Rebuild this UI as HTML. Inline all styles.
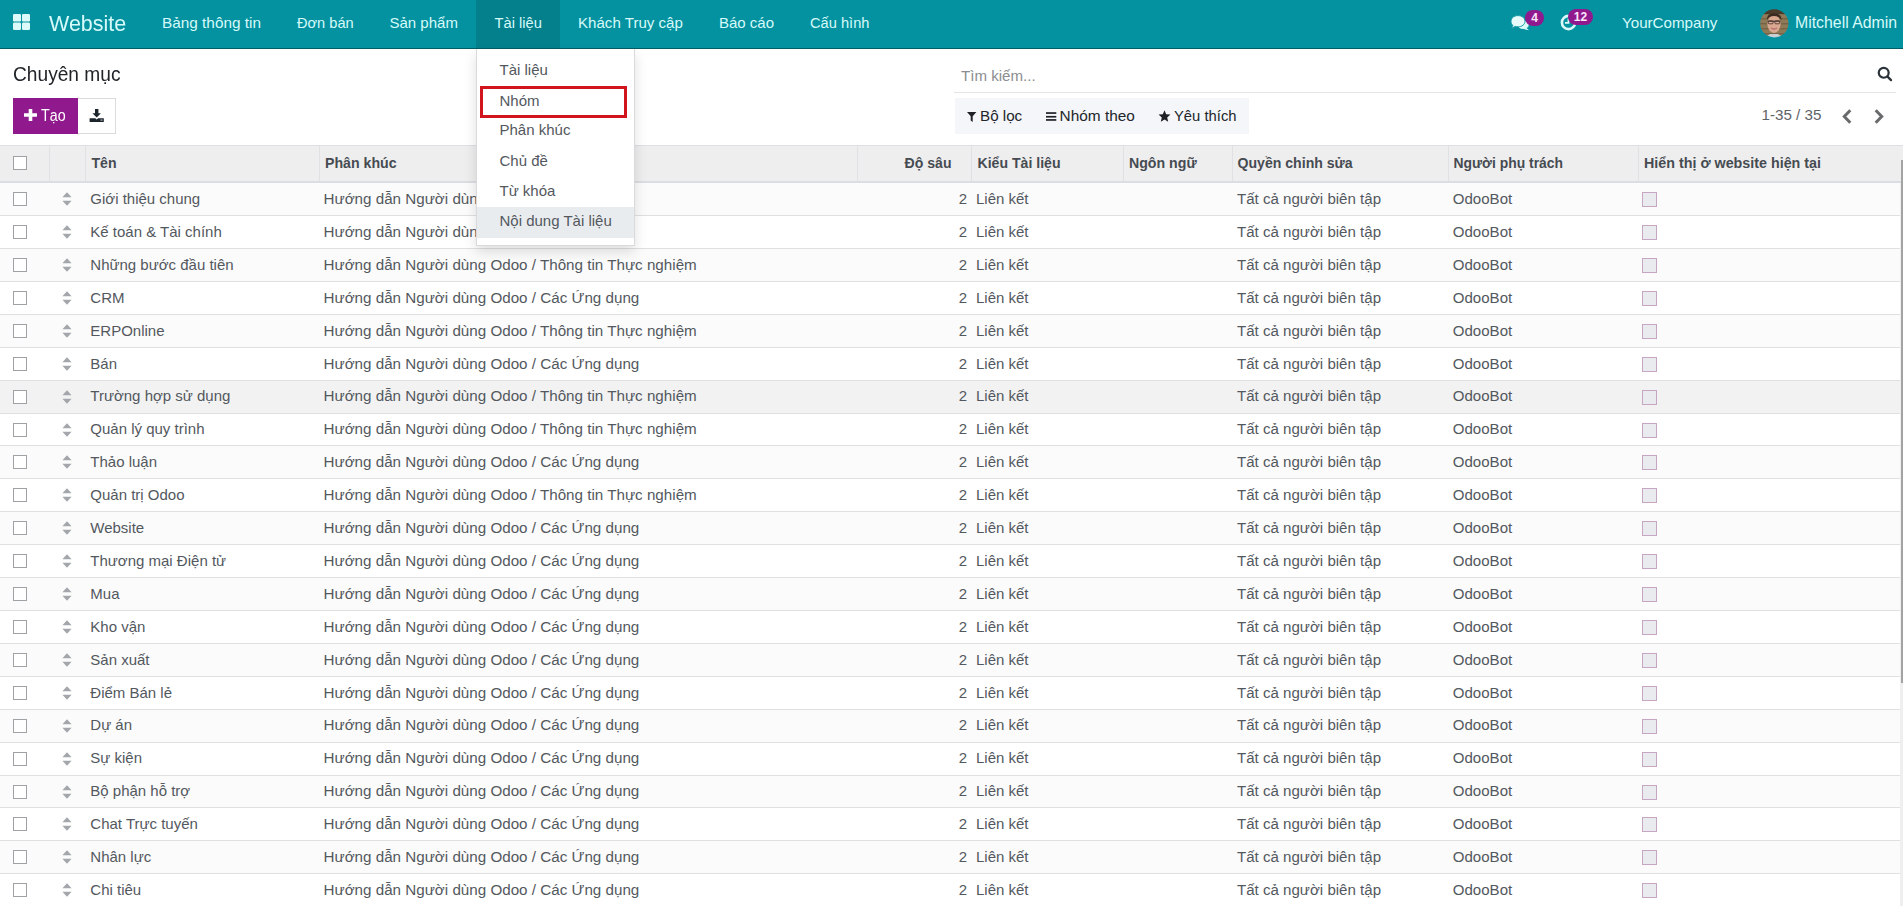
<!DOCTYPE html><html><head><meta charset='utf-8'><title>Chuyên mục</title><style>
*{box-sizing:border-box;margin:0;padding:0}
html,body{width:1903px;height:906px;overflow:hidden;background:#fff;font-family:"Liberation Sans",sans-serif}
.t{position:absolute;line-height:20px;white-space:nowrap}
.a{position:absolute}
nav.o_main_navbar{position:absolute;left:0;top:0;width:1903px;height:49px;background:#0592a0;border-bottom:1px solid #035d64}
.navtxt{color:#d6fafa}
.badge{position:absolute;background:#901a8d;color:#fbe6fb;border-radius:9px;font-size:12px;font-weight:bold;line-height:16px;height:16px;text-align:center}
.hdr{position:absolute;left:0;top:145px;width:1903px;height:38px;background:#eeeeee;border-top:1px solid #dcdfe3;border-bottom:2px solid #dadde1}
.vsep{position:absolute;top:146px;height:35px;width:1px;background:#dfe1e4}
.row{position:absolute;left:0;width:1900px;border-bottom:1px solid #dfe0e2}
.cb{position:absolute;width:14px;height:14px;border:1px solid #9fa2a5;background:#fff}
.cbd{position:absolute;width:15px;height:15px;border:1px solid #c7a6c4;background:#e9ebee}
.dd{position:absolute;left:476px;top:49px;width:159px;height:197px;background:#fff;border:1px solid #d9dadb;border-top:none;box-shadow:0 6px 12px rgba(0,0,0,0.13)}
</style></head><body>
<nav class='o_main_navbar'>
<svg class='a' style='left:13px;top:14px' width='17' height='16' viewBox='0 0 17 16'><g fill='#dcfafa'><rect x='0' y='0' width='8' height='7.5' rx='1.2'/><rect x='9' y='0' width='8' height='7.5' rx='1.2'/><rect x='0' y='8.5' width='8' height='7.5' rx='1.2'/><rect x='9' y='8.5' width='8' height='7.5' rx='1.2'/></g></svg>
<span class='t ' style='top:14px;font-size:22.5px;color:#d6fafa;left:48.7px;transform:scaleX(0.955);transform-origin:0 0;'>Website</span>
<div class='a' style='left:476px;top:0;width:84px;height:48px;background:#04808c'></div>
<span class='t ' style='top:13px;font-size:15.35px;color:#d6fafa;left:162px;'>Bảng thông tin</span>
<span class='t ' style='top:13px;font-size:14.6px;color:#d6fafa;left:297px;'>Đơn bán</span>
<span class='t ' style='top:13px;font-size:15px;color:#d6fafa;left:389.5px;'>Sản phẩm</span>
<span class='t ' style='top:13px;font-size:14.7px;color:#d6fafa;left:494.5px;'>Tài liệu</span>
<span class='t ' style='top:13px;font-size:15.1px;color:#d6fafa;left:578px;'>Khách Truy cập</span>
<span class='t ' style='top:13px;font-size:15px;color:#d6fafa;left:719px;'>Báo cáo</span>
<span class='t ' style='top:13px;font-size:14.65px;color:#d6fafa;left:810px;'>Cấu hình</span>
<svg class='a' style='left:1510px;top:15px' width='20' height='16' viewBox='0 0 20 16'>
<g fill='#d8fbf8'><ellipse cx='13.2' cy='9.8' rx='5.6' ry='4.3'/><path d='M16 12.5 L19 15.3 L12.5 13.8Z'/></g>
<g fill='#e6fbfa' stroke='#0592a0' stroke-width='0.9'><path d='M8 0.6 C12 0.6 15 3 15 6.2 C15 9.4 12 11.8 8 11.8 C7 11.8 6 11.7 5.2 11.4 L1.6 13.4 L2.8 10.2 C1.6 9.2 1 7.8 1 6.2 C1 3 4 0.6 8 0.6Z'/></g></svg>
<div class='badge' style='left:1525px;top:10px;width:19px'>4</div>
<svg class='a' style='left:1560px;top:14px' width='17' height='17' viewBox='0 0 17 17'>
<circle cx='8.5' cy='8.5' r='6.6' fill='none' stroke='#dcfafa' stroke-width='2.6'/>
<path d='M8.5 4.5 V8.8 H5' fill='none' stroke='#dcfafa' stroke-width='1.8'/></svg>
<div class='badge' style='left:1568px;top:9px;width:25px'>12</div>
<span class='t ' style='top:13px;font-size:15.15px;color:#d6fafa;left:1622px;'>YourCompany</span>
<svg class='a' style='left:1760px;top:9px' width='29' height='29' viewBox='0 0 29 29'>
<defs><clipPath id='av'><circle cx='14.3' cy='14.4' r='14.1'/></clipPath><filter id='bl' x='-10%' y='-10%' width='120%' height='120%'><feGaussianBlur stdDeviation='0.55'/></filter></defs>
<g clip-path='url(#av)'><g filter='url(#bl)'><rect width='29' height='29' fill='#8f7a58'/>
<g fill='#6f5c40' opacity='0.7'><rect y='4' width='29' height='1.5'/><rect y='9' width='29' height='1.5'/><rect y='14' width='29' height='1.5'/><rect y='19' width='29' height='1.5'/><rect y='24' width='29' height='1.5'/></g>
<rect x='0' y='0' width='29' height='5' fill='#3a2c22' opacity='0.8'/>
<path d='M10 25 L18 25 L24 29 L4 29Z' fill='#c9cfd2'/>
<ellipse cx='14' cy='15' rx='6.6' ry='9' fill='#d9a890'/>
<path d='M6.8 11 Q7 4 14 4.3 Q21.5 4.5 21.5 11 Q19 7 14 7 Q9 7 6.8 11Z' fill='#3b2a22'/>
<path d='M7.5 12.2 H20.5' stroke='#3a2c2a' stroke-width='1'/>
<rect x='8.3' y='11.8' width='4.8' height='3' rx='1' fill='none' stroke='#3a2c2a' stroke-width='0.8'/>
<rect x='14.8' y='11.8' width='4.8' height='3' rx='1' fill='none' stroke='#3a2c2a' stroke-width='0.8'/>
<path d='M11 19 Q14 21 17 19' fill='none' stroke='#b86a6a' stroke-width='1.3'/>
</g></g></svg>
<span class='t ' style='top:13px;font-size:15.85px;color:#d6fafa;left:1795px;'>Mitchell Admin</span>
</nav>
<span class='t ' style='top:64px;font-size:21px;color:#212529;left:12.6px;transform:scaleX(0.912);transform-origin:0 0;'>Chuyên mục</span>
<div class='a' style='left:13px;top:98px;width:65px;height:36px;background:#901a8d'></div>
<svg class='a' style='left:24px;top:109px' width='13' height='12' viewBox='0 0 13 12'><path d='M4.7 0H8.3V4.3H13V7.7H8.3V12H4.7V7.7H0V4.3H4.7Z' fill='#fff'/></svg>
<span class='t ' style='top:106px;font-size:15.6px;color:#ffffff;left:40.5px;transform:scaleX(0.915);transform-origin:0 0;'>Tạo</span>
<div class='a' style='left:78px;top:98px;width:38px;height:36px;border:1px solid #dcdcdc;border-left:none;background:#fff'></div>
<svg class='a' style='left:89px;top:109px' width='15' height='13' viewBox='0 0 15 13'><path d='M6 0H9.4V4.3H11.9L7.7 8.6L3.4 4.3H6Z' fill='#1c242c'/><path d='M0.6 9.2H6.3L7.7 10.4L9.1 9.2H14.8V12.9H0.6Z' fill='#1c242c'/><rect x='11.5' y='10.6' width='2' height='0.9' fill='#e8e8e8'/></svg>
<span class='t ' style='top:66px;font-size:15.1px;color:#8b8d90;left:961px;'>Tìm kiếm...</span>
<div class='a' style='left:954px;top:92px;width:942px;height:1px;background:#e2e4e6'></div>
<svg class='a' style='left:1877px;top:66px' width='16' height='16' viewBox='0 0 16 16'><circle cx='6.7' cy='6.8' r='4.95' fill='none' stroke='#2b3238' stroke-width='2.2'/><path d='M10.3 10.4L14 14.1' stroke='#2b3238' stroke-width='2.3' stroke-linecap='round'/></svg>
<div class='a' style='left:955px;top:98px;width:294px;height:36px;background:#f4f6f9'></div>
<svg class='a' style='left:967px;top:112px' width='10' height='10' viewBox='0 0 10 10'><path d='M0 0H9.4L5.7 4.2V9.9L3.7 8.4V4.2Z' fill='#1e2227'/></svg>
<span class='t ' style='top:106px;font-size:15.2px;color:#22262b;left:980px;'>Bộ lọc</span>
<svg class='a' style='left:1046px;top:112px' width='11' height='9' viewBox='0 0 11 9'><g fill='#1e2227'><rect y='0.2' width='10.3' height='1.7'/><rect y='3.9' width='10.3' height='1.7'/><rect y='7.1' width='10.3' height='1.7'/></g></svg>
<span class='t ' style='top:106px;font-size:15.4px;color:#22262b;left:1059.6px;'>Nhóm theo</span>
<svg class='a' style='left:1158px;top:110px' width='13' height='12.5' viewBox='0 0 24 23'><path d='M12 0.5L15.1 7.6L23 8.3L17 13.6L18.8 21.6L12 17.3L5.2 21.6L7 13.6L1 8.3L8.9 7.6Z' fill='#1e2227'/></svg>
<span class='t ' style='top:106px;font-size:14.8px;color:#22262b;left:1174px;'>Yêu thích</span>
<span class='t ' style='top:105px;font-size:15.2px;color:#5f6368;left:1761.5px;'>1-35 / 35</span>
<svg class='a' style='left:1842px;top:108.5px' width='10' height='15' viewBox='0 0 10 15'><path d='M8.3 1.3L2.3 7.5L8.3 13.7' fill='none' stroke='#686a6c' stroke-width='3'/></svg>
<svg class='a' style='left:1874px;top:108.5px' width='10' height='15' viewBox='0 0 10 15'><path d='M1.7 1.3L7.7 7.5L1.7 13.7' fill='none' stroke='#686a6c' stroke-width='3'/></svg>
<div class='hdr'></div>
<div class='vsep' style='left:49px'></div>
<div class='vsep' style='left:85px'></div>
<div class='vsep' style='left:319px'></div>
<div class='vsep' style='left:857px'></div>
<div class='vsep' style='left:971px'></div>
<div class='vsep' style='left:1123px'></div>
<div class='vsep' style='left:1232px'></div>
<div class='vsep' style='left:1448px'></div>
<div class='vsep' style='left:1638px'></div>
<div class='cb' style='left:13px;top:156px'></div>
<span class='t ' style='top:152.5px;font-size:14.1px;color:#464b52;font-weight:bold;left:91.5px;'>Tên</span>
<span class='t ' style='top:152.5px;font-size:14.18px;color:#464b52;font-weight:bold;left:325px;'>Phân khúc</span>
<span class='t ' style='top:152.5px;font-size:14.07px;color:#464b52;font-weight:bold;right:951.5px;'>Độ sâu</span>
<span class='t ' style='top:152.5px;font-size:14.1px;color:#464b52;font-weight:bold;left:977.5px;'>Kiểu Tài liệu</span>
<span class='t ' style='top:152.5px;font-size:14.17px;color:#464b52;font-weight:bold;left:1129px;'>Ngôn ngữ</span>
<span class='t ' style='top:152.5px;font-size:14.1px;color:#464b52;font-weight:bold;left:1237.5px;'>Quyền chỉnh sửa</span>
<span class='t ' style='top:152.5px;font-size:13.92px;color:#464b52;font-weight:bold;left:1453.5px;'>Người phụ trách</span>
<span class='t ' style='top:152.5px;font-size:14.3px;color:#464b52;font-weight:bold;left:1644px;'>Hiển thị ở website hiện tại</span>
<div class='row' style='top:183px;height:33px;background:#fbfbfb'>
<div class='cb' style='left:13px;top:9px'></div>
<svg class='a' style='left:62px;top:8.5px' width='10' height='14' viewBox='0 0 10 14'><g fill='#a3a7ab'><path d='M5 0.3L9.6 5.2H0.4Z'/><path d='M5 13.7L9.6 8.8H0.4Z'/></g></svg>
<span class='t ' style='top:6.000000000000011px;font-size:15px;color:#53585e;left:90.3px;'>Giới thiệu chung</span>
<div class='a' style='left:0;top:0;width:634px;height:30px;overflow:hidden'><span class='t ' style='top:6.000000000000011px;font-size:15.2px;color:#53585e;left:323.5px;'>Hướng dẫn Người dùng Odoo / Thông tin Thực nghiệm</span>
</div><span class='t ' style='top:6.000000000000011px;font-size:15px;color:#53585e;right:933px;'>2</span>
<span class='t ' style='top:6.000000000000011px;font-size:15px;color:#53585e;left:976px;'>Liên kết</span>
<span class='t ' style='top:6.000000000000011px;font-size:15.08px;color:#53585e;left:1237px;'>Tất cả người biên tập</span>
<span class='t ' style='top:6.000000000000011px;font-size:15.05px;color:#53585e;left:1452.8px;'>OdooBot</span>
<div class='cbd' style='left:1642px;top:9px'></div>
</div>
<div class='row' style='top:216px;height:33px;background:#ffffff'>
<div class='cb' style='left:13px;top:9px'></div>
<svg class='a' style='left:62px;top:8.5px' width='10' height='14' viewBox='0 0 10 14'><g fill='#a3a7ab'><path d='M5 0.3L9.6 5.2H0.4Z'/><path d='M5 13.7L9.6 8.8H0.4Z'/></g></svg>
<span class='t ' style='top:5.900000000000016px;font-size:15px;color:#53585e;left:90.3px;'>Kế toán &amp; Tài chính</span>
<div class='a' style='left:0;top:0;width:634px;height:30px;overflow:hidden'><span class='t ' style='top:5.900000000000016px;font-size:15.2px;color:#53585e;left:323.5px;'>Hướng dẫn Người dùng Odoo / Thông tin Thực nghiệm</span>
</div><span class='t ' style='top:5.900000000000016px;font-size:15px;color:#53585e;right:933px;'>2</span>
<span class='t ' style='top:5.900000000000016px;font-size:15px;color:#53585e;left:976px;'>Liên kết</span>
<span class='t ' style='top:5.900000000000016px;font-size:15.08px;color:#53585e;left:1237px;'>Tất cả người biên tập</span>
<span class='t ' style='top:5.900000000000016px;font-size:15.05px;color:#53585e;left:1452.8px;'>OdooBot</span>
<div class='cbd' style='left:1642px;top:9px'></div>
</div>
<div class='row' style='top:249px;height:33px;background:#fbfbfb'>
<div class='cb' style='left:13px;top:9px'></div>
<svg class='a' style='left:62px;top:8.5px' width='10' height='14' viewBox='0 0 10 14'><g fill='#a3a7ab'><path d='M5 0.3L9.6 5.2H0.4Z'/><path d='M5 13.7L9.6 8.8H0.4Z'/></g></svg>
<span class='t ' style='top:5.800000000000022px;font-size:15px;color:#53585e;left:90.3px;'>Những bước đầu tiên</span>
<span class='t ' style='top:5.800000000000022px;font-size:15.2px;color:#53585e;left:323.5px;'>Hướng dẫn Người dùng Odoo / Thông tin Thực nghiệm</span>
<span class='t ' style='top:5.800000000000022px;font-size:15px;color:#53585e;right:933px;'>2</span>
<span class='t ' style='top:5.800000000000022px;font-size:15px;color:#53585e;left:976px;'>Liên kết</span>
<span class='t ' style='top:5.800000000000022px;font-size:15.08px;color:#53585e;left:1237px;'>Tất cả người biên tập</span>
<span class='t ' style='top:5.800000000000022px;font-size:15.05px;color:#53585e;left:1452.8px;'>OdooBot</span>
<div class='cbd' style='left:1642px;top:9px'></div>
</div>
<div class='row' style='top:282px;height:33px;background:#ffffff'>
<div class='cb' style='left:13px;top:9px'></div>
<svg class='a' style='left:62px;top:8.5px' width='10' height='14' viewBox='0 0 10 14'><g fill='#a3a7ab'><path d='M5 0.3L9.6 5.2H0.4Z'/><path d='M5 13.7L9.6 8.8H0.4Z'/></g></svg>
<span class='t ' style='top:5.699999999999999px;font-size:15px;color:#53585e;left:90.3px;'>CRM</span>
<span class='t ' style='top:5.699999999999999px;font-size:15.2px;color:#53585e;left:323.5px;'>Hướng dẫn Người dùng Odoo / Các Ứng dụng</span>
<span class='t ' style='top:5.699999999999999px;font-size:15px;color:#53585e;right:933px;'>2</span>
<span class='t ' style='top:5.699999999999999px;font-size:15px;color:#53585e;left:976px;'>Liên kết</span>
<span class='t ' style='top:5.699999999999999px;font-size:15.08px;color:#53585e;left:1237px;'>Tất cả người biên tập</span>
<span class='t ' style='top:5.699999999999999px;font-size:15.05px;color:#53585e;left:1452.8px;'>OdooBot</span>
<div class='cbd' style='left:1642px;top:9px'></div>
</div>
<div class='row' style='top:315px;height:33px;background:#fbfbfb'>
<div class='cb' style='left:13px;top:9px'></div>
<svg class='a' style='left:62px;top:8.5px' width='10' height='14' viewBox='0 0 10 14'><g fill='#a3a7ab'><path d='M5 0.3L9.6 5.2H0.4Z'/><path d='M5 13.7L9.6 8.8H0.4Z'/></g></svg>
<span class='t ' style='top:5.5999999999999766px;font-size:15px;color:#53585e;left:90.3px;'>ERPOnline</span>
<span class='t ' style='top:5.5999999999999766px;font-size:15.2px;color:#53585e;left:323.5px;'>Hướng dẫn Người dùng Odoo / Thông tin Thực nghiệm</span>
<span class='t ' style='top:5.5999999999999766px;font-size:15px;color:#53585e;right:933px;'>2</span>
<span class='t ' style='top:5.5999999999999766px;font-size:15px;color:#53585e;left:976px;'>Liên kết</span>
<span class='t ' style='top:5.5999999999999766px;font-size:15.08px;color:#53585e;left:1237px;'>Tất cả người biên tập</span>
<span class='t ' style='top:5.5999999999999766px;font-size:15.05px;color:#53585e;left:1452.8px;'>OdooBot</span>
<div class='cbd' style='left:1642px;top:9px'></div>
</div>
<div class='row' style='top:348px;height:33px;background:#ffffff'>
<div class='cb' style='left:13px;top:9px'></div>
<svg class='a' style='left:62px;top:8.5px' width='10' height='14' viewBox='0 0 10 14'><g fill='#a3a7ab'><path d='M5 0.3L9.6 5.2H0.4Z'/><path d='M5 13.7L9.6 8.8H0.4Z'/></g></svg>
<span class='t ' style='top:5.500000000000011px;font-size:15px;color:#53585e;left:90.3px;'>Bán</span>
<span class='t ' style='top:5.500000000000011px;font-size:15.2px;color:#53585e;left:323.5px;'>Hướng dẫn Người dùng Odoo / Các Ứng dụng</span>
<span class='t ' style='top:5.500000000000011px;font-size:15px;color:#53585e;right:933px;'>2</span>
<span class='t ' style='top:5.500000000000011px;font-size:15px;color:#53585e;left:976px;'>Liên kết</span>
<span class='t ' style='top:5.500000000000011px;font-size:15.08px;color:#53585e;left:1237px;'>Tất cả người biên tập</span>
<span class='t ' style='top:5.500000000000011px;font-size:15.05px;color:#53585e;left:1452.8px;'>OdooBot</span>
<div class='cbd' style='left:1642px;top:9px'></div>
</div>
<div class='row' style='top:381px;height:33px;background:#f2f2f2'>
<div class='cb' style='left:13px;top:9px'></div>
<svg class='a' style='left:62px;top:8.5px' width='10' height='14' viewBox='0 0 10 14'><g fill='#a3a7ab'><path d='M5 0.3L9.6 5.2H0.4Z'/><path d='M5 13.7L9.6 8.8H0.4Z'/></g></svg>
<span class='t ' style='top:5.399999999999988px;font-size:15px;color:#53585e;left:90.3px;'>Trường hợp sử dụng</span>
<span class='t ' style='top:5.399999999999988px;font-size:15.2px;color:#53585e;left:323.5px;'>Hướng dẫn Người dùng Odoo / Thông tin Thực nghiệm</span>
<span class='t ' style='top:5.399999999999988px;font-size:15px;color:#53585e;right:933px;'>2</span>
<span class='t ' style='top:5.399999999999988px;font-size:15px;color:#53585e;left:976px;'>Liên kết</span>
<span class='t ' style='top:5.399999999999988px;font-size:15.08px;color:#53585e;left:1237px;'>Tất cả người biên tập</span>
<span class='t ' style='top:5.399999999999988px;font-size:15.05px;color:#53585e;left:1452.8px;'>OdooBot</span>
<div class='cbd' style='left:1642px;top:9px'></div>
</div>
<div class='row' style='top:414px;height:32px;background:#ffffff'>
<div class='cb' style='left:13px;top:9px'></div>
<svg class='a' style='left:62px;top:8.5px' width='10' height='14' viewBox='0 0 10 14'><g fill='#a3a7ab'><path d='M5 0.3L9.6 5.2H0.4Z'/><path d='M5 13.7L9.6 8.8H0.4Z'/></g></svg>
<span class='t ' style='top:5.300000000000022px;font-size:15px;color:#53585e;left:90.3px;'>Quản lý quy trình</span>
<span class='t ' style='top:5.300000000000022px;font-size:15.2px;color:#53585e;left:323.5px;'>Hướng dẫn Người dùng Odoo / Thông tin Thực nghiệm</span>
<span class='t ' style='top:5.300000000000022px;font-size:15px;color:#53585e;right:933px;'>2</span>
<span class='t ' style='top:5.300000000000022px;font-size:15px;color:#53585e;left:976px;'>Liên kết</span>
<span class='t ' style='top:5.300000000000022px;font-size:15.08px;color:#53585e;left:1237px;'>Tất cả người biên tập</span>
<span class='t ' style='top:5.300000000000022px;font-size:15.05px;color:#53585e;left:1452.8px;'>OdooBot</span>
<div class='cbd' style='left:1642px;top:9px'></div>
</div>
<div class='row' style='top:446px;height:33px;background:#fbfbfb'>
<div class='cb' style='left:13px;top:9px'></div>
<svg class='a' style='left:62px;top:8.5px' width='10' height='14' viewBox='0 0 10 14'><g fill='#a3a7ab'><path d='M5 0.3L9.6 5.2H0.4Z'/><path d='M5 13.7L9.6 8.8H0.4Z'/></g></svg>
<span class='t ' style='top:6.199999999999999px;font-size:15px;color:#53585e;left:90.3px;'>Thảo luận</span>
<span class='t ' style='top:6.199999999999999px;font-size:15.2px;color:#53585e;left:323.5px;'>Hướng dẫn Người dùng Odoo / Các Ứng dụng</span>
<span class='t ' style='top:6.199999999999999px;font-size:15px;color:#53585e;right:933px;'>2</span>
<span class='t ' style='top:6.199999999999999px;font-size:15px;color:#53585e;left:976px;'>Liên kết</span>
<span class='t ' style='top:6.199999999999999px;font-size:15.08px;color:#53585e;left:1237px;'>Tất cả người biên tập</span>
<span class='t ' style='top:6.199999999999999px;font-size:15.05px;color:#53585e;left:1452.8px;'>OdooBot</span>
<div class='cbd' style='left:1642px;top:9px'></div>
</div>
<div class='row' style='top:479px;height:33px;background:#ffffff'>
<div class='cb' style='left:13px;top:9px'></div>
<svg class='a' style='left:62px;top:8.5px' width='10' height='14' viewBox='0 0 10 14'><g fill='#a3a7ab'><path d='M5 0.3L9.6 5.2H0.4Z'/><path d='M5 13.7L9.6 8.8H0.4Z'/></g></svg>
<span class='t ' style='top:6.0999999999999766px;font-size:15px;color:#53585e;left:90.3px;'>Quản trị Odoo</span>
<span class='t ' style='top:6.0999999999999766px;font-size:15.2px;color:#53585e;left:323.5px;'>Hướng dẫn Người dùng Odoo / Thông tin Thực nghiệm</span>
<span class='t ' style='top:6.0999999999999766px;font-size:15px;color:#53585e;right:933px;'>2</span>
<span class='t ' style='top:6.0999999999999766px;font-size:15px;color:#53585e;left:976px;'>Liên kết</span>
<span class='t ' style='top:6.0999999999999766px;font-size:15.08px;color:#53585e;left:1237px;'>Tất cả người biên tập</span>
<span class='t ' style='top:6.0999999999999766px;font-size:15.05px;color:#53585e;left:1452.8px;'>OdooBot</span>
<div class='cbd' style='left:1642px;top:9px'></div>
</div>
<div class='row' style='top:512px;height:33px;background:#fbfbfb'>
<div class='cb' style='left:13px;top:9px'></div>
<svg class='a' style='left:62px;top:8.5px' width='10' height='14' viewBox='0 0 10 14'><g fill='#a3a7ab'><path d='M5 0.3L9.6 5.2H0.4Z'/><path d='M5 13.7L9.6 8.8H0.4Z'/></g></svg>
<span class='t ' style='top:5.999999999999954px;font-size:15px;color:#53585e;left:90.3px;'>Website</span>
<span class='t ' style='top:5.999999999999954px;font-size:15.2px;color:#53585e;left:323.5px;'>Hướng dẫn Người dùng Odoo / Các Ứng dụng</span>
<span class='t ' style='top:5.999999999999954px;font-size:15px;color:#53585e;right:933px;'>2</span>
<span class='t ' style='top:5.999999999999954px;font-size:15px;color:#53585e;left:976px;'>Liên kết</span>
<span class='t ' style='top:5.999999999999954px;font-size:15.08px;color:#53585e;left:1237px;'>Tất cả người biên tập</span>
<span class='t ' style='top:5.999999999999954px;font-size:15.05px;color:#53585e;left:1452.8px;'>OdooBot</span>
<div class='cbd' style='left:1642px;top:9px'></div>
</div>
<div class='row' style='top:545px;height:33px;background:#ffffff'>
<div class='cb' style='left:13px;top:9px'></div>
<svg class='a' style='left:62px;top:8.5px' width='10' height='14' viewBox='0 0 10 14'><g fill='#a3a7ab'><path d='M5 0.3L9.6 5.2H0.4Z'/><path d='M5 13.7L9.6 8.8H0.4Z'/></g></svg>
<span class='t ' style='top:5.900000000000045px;font-size:15px;color:#53585e;left:90.3px;'>Thương mại Điện tử</span>
<span class='t ' style='top:5.900000000000045px;font-size:15.2px;color:#53585e;left:323.5px;'>Hướng dẫn Người dùng Odoo / Các Ứng dụng</span>
<span class='t ' style='top:5.900000000000045px;font-size:15px;color:#53585e;right:933px;'>2</span>
<span class='t ' style='top:5.900000000000045px;font-size:15px;color:#53585e;left:976px;'>Liên kết</span>
<span class='t ' style='top:5.900000000000045px;font-size:15.08px;color:#53585e;left:1237px;'>Tất cả người biên tập</span>
<span class='t ' style='top:5.900000000000045px;font-size:15.05px;color:#53585e;left:1452.8px;'>OdooBot</span>
<div class='cbd' style='left:1642px;top:9px'></div>
</div>
<div class='row' style='top:578px;height:33px;background:#fbfbfb'>
<div class='cb' style='left:13px;top:9px'></div>
<svg class='a' style='left:62px;top:8.5px' width='10' height='14' viewBox='0 0 10 14'><g fill='#a3a7ab'><path d='M5 0.3L9.6 5.2H0.4Z'/><path d='M5 13.7L9.6 8.8H0.4Z'/></g></svg>
<span class='t ' style='top:5.799999999999908px;font-size:15px;color:#53585e;left:90.3px;'>Mua</span>
<span class='t ' style='top:5.799999999999908px;font-size:15.2px;color:#53585e;left:323.5px;'>Hướng dẫn Người dùng Odoo / Các Ứng dụng</span>
<span class='t ' style='top:5.799999999999908px;font-size:15px;color:#53585e;right:933px;'>2</span>
<span class='t ' style='top:5.799999999999908px;font-size:15px;color:#53585e;left:976px;'>Liên kết</span>
<span class='t ' style='top:5.799999999999908px;font-size:15.08px;color:#53585e;left:1237px;'>Tất cả người biên tập</span>
<span class='t ' style='top:5.799999999999908px;font-size:15.05px;color:#53585e;left:1452.8px;'>OdooBot</span>
<div class='cbd' style='left:1642px;top:9px'></div>
</div>
<div class='row' style='top:611px;height:33px;background:#ffffff'>
<div class='cb' style='left:13px;top:9px'></div>
<svg class='a' style='left:62px;top:8.5px' width='10' height='14' viewBox='0 0 10 14'><g fill='#a3a7ab'><path d='M5 0.3L9.6 5.2H0.4Z'/><path d='M5 13.7L9.6 8.8H0.4Z'/></g></svg>
<span class='t ' style='top:5.699999999999999px;font-size:15px;color:#53585e;left:90.3px;'>Kho vận</span>
<span class='t ' style='top:5.699999999999999px;font-size:15.2px;color:#53585e;left:323.5px;'>Hướng dẫn Người dùng Odoo / Các Ứng dụng</span>
<span class='t ' style='top:5.699999999999999px;font-size:15px;color:#53585e;right:933px;'>2</span>
<span class='t ' style='top:5.699999999999999px;font-size:15px;color:#53585e;left:976px;'>Liên kết</span>
<span class='t ' style='top:5.699999999999999px;font-size:15.08px;color:#53585e;left:1237px;'>Tất cả người biên tập</span>
<span class='t ' style='top:5.699999999999999px;font-size:15.05px;color:#53585e;left:1452.8px;'>OdooBot</span>
<div class='cbd' style='left:1642px;top:9px'></div>
</div>
<div class='row' style='top:644px;height:33px;background:#fbfbfb'>
<div class='cb' style='left:13px;top:9px'></div>
<svg class='a' style='left:62px;top:8.5px' width='10' height='14' viewBox='0 0 10 14'><g fill='#a3a7ab'><path d='M5 0.3L9.6 5.2H0.4Z'/><path d='M5 13.7L9.6 8.8H0.4Z'/></g></svg>
<span class='t ' style='top:5.5999999999999766px;font-size:15px;color:#53585e;left:90.3px;'>Sản xuất</span>
<span class='t ' style='top:5.5999999999999766px;font-size:15.2px;color:#53585e;left:323.5px;'>Hướng dẫn Người dùng Odoo / Các Ứng dụng</span>
<span class='t ' style='top:5.5999999999999766px;font-size:15px;color:#53585e;right:933px;'>2</span>
<span class='t ' style='top:5.5999999999999766px;font-size:15px;color:#53585e;left:976px;'>Liên kết</span>
<span class='t ' style='top:5.5999999999999766px;font-size:15.08px;color:#53585e;left:1237px;'>Tất cả người biên tập</span>
<span class='t ' style='top:5.5999999999999766px;font-size:15.05px;color:#53585e;left:1452.8px;'>OdooBot</span>
<div class='cbd' style='left:1642px;top:9px'></div>
</div>
<div class='row' style='top:677px;height:33px;background:#ffffff'>
<div class='cb' style='left:13px;top:9px'></div>
<svg class='a' style='left:62px;top:8.5px' width='10' height='14' viewBox='0 0 10 14'><g fill='#a3a7ab'><path d='M5 0.3L9.6 5.2H0.4Z'/><path d='M5 13.7L9.6 8.8H0.4Z'/></g></svg>
<span class='t ' style='top:5.499999999999954px;font-size:15px;color:#53585e;left:90.3px;'>Điểm Bán lẻ</span>
<span class='t ' style='top:5.499999999999954px;font-size:15.2px;color:#53585e;left:323.5px;'>Hướng dẫn Người dùng Odoo / Các Ứng dụng</span>
<span class='t ' style='top:5.499999999999954px;font-size:15px;color:#53585e;right:933px;'>2</span>
<span class='t ' style='top:5.499999999999954px;font-size:15px;color:#53585e;left:976px;'>Liên kết</span>
<span class='t ' style='top:5.499999999999954px;font-size:15.08px;color:#53585e;left:1237px;'>Tất cả người biên tập</span>
<span class='t ' style='top:5.499999999999954px;font-size:15.05px;color:#53585e;left:1452.8px;'>OdooBot</span>
<div class='cbd' style='left:1642px;top:9px'></div>
</div>
<div class='row' style='top:710px;height:33px;background:#fbfbfb'>
<div class='cb' style='left:13px;top:9px'></div>
<svg class='a' style='left:62px;top:8.5px' width='10' height='14' viewBox='0 0 10 14'><g fill='#a3a7ab'><path d='M5 0.3L9.6 5.2H0.4Z'/><path d='M5 13.7L9.6 8.8H0.4Z'/></g></svg>
<span class='t ' style='top:5.400000000000045px;font-size:15px;color:#53585e;left:90.3px;'>Dự án</span>
<span class='t ' style='top:5.400000000000045px;font-size:15.2px;color:#53585e;left:323.5px;'>Hướng dẫn Người dùng Odoo / Các Ứng dụng</span>
<span class='t ' style='top:5.400000000000045px;font-size:15px;color:#53585e;right:933px;'>2</span>
<span class='t ' style='top:5.400000000000045px;font-size:15px;color:#53585e;left:976px;'>Liên kết</span>
<span class='t ' style='top:5.400000000000045px;font-size:15.08px;color:#53585e;left:1237px;'>Tất cả người biên tập</span>
<span class='t ' style='top:5.400000000000045px;font-size:15.05px;color:#53585e;left:1452.8px;'>OdooBot</span>
<div class='cbd' style='left:1642px;top:9px'></div>
</div>
<div class='row' style='top:743px;height:33px;background:#ffffff'>
<div class='cb' style='left:13px;top:9px'></div>
<svg class='a' style='left:62px;top:8.5px' width='10' height='14' viewBox='0 0 10 14'><g fill='#a3a7ab'><path d='M5 0.3L9.6 5.2H0.4Z'/><path d='M5 13.7L9.6 8.8H0.4Z'/></g></svg>
<span class='t ' style='top:5.299999999999908px;font-size:15px;color:#53585e;left:90.3px;'>Sự kiện</span>
<span class='t ' style='top:5.299999999999908px;font-size:15.2px;color:#53585e;left:323.5px;'>Hướng dẫn Người dùng Odoo / Các Ứng dụng</span>
<span class='t ' style='top:5.299999999999908px;font-size:15px;color:#53585e;right:933px;'>2</span>
<span class='t ' style='top:5.299999999999908px;font-size:15px;color:#53585e;left:976px;'>Liên kết</span>
<span class='t ' style='top:5.299999999999908px;font-size:15.08px;color:#53585e;left:1237px;'>Tất cả người biên tập</span>
<span class='t ' style='top:5.299999999999908px;font-size:15.05px;color:#53585e;left:1452.8px;'>OdooBot</span>
<div class='cbd' style='left:1642px;top:9px'></div>
</div>
<div class='row' style='top:776px;height:32px;background:#fbfbfb'>
<div class='cb' style='left:13px;top:9px'></div>
<svg class='a' style='left:62px;top:8.5px' width='10' height='14' viewBox='0 0 10 14'><g fill='#a3a7ab'><path d='M5 0.3L9.6 5.2H0.4Z'/><path d='M5 13.7L9.6 8.8H0.4Z'/></g></svg>
<span class='t ' style='top:5.199999999999999px;font-size:15px;color:#53585e;left:90.3px;'>Bộ phận hỗ trợ</span>
<span class='t ' style='top:5.199999999999999px;font-size:15.2px;color:#53585e;left:323.5px;'>Hướng dẫn Người dùng Odoo / Các Ứng dụng</span>
<span class='t ' style='top:5.199999999999999px;font-size:15px;color:#53585e;right:933px;'>2</span>
<span class='t ' style='top:5.199999999999999px;font-size:15px;color:#53585e;left:976px;'>Liên kết</span>
<span class='t ' style='top:5.199999999999999px;font-size:15.08px;color:#53585e;left:1237px;'>Tất cả người biên tập</span>
<span class='t ' style='top:5.199999999999999px;font-size:15.05px;color:#53585e;left:1452.8px;'>OdooBot</span>
<div class='cbd' style='left:1642px;top:9px'></div>
</div>
<div class='row' style='top:808px;height:33px;background:#ffffff'>
<div class='cb' style='left:13px;top:9px'></div>
<svg class='a' style='left:62px;top:8.5px' width='10' height='14' viewBox='0 0 10 14'><g fill='#a3a7ab'><path d='M5 0.3L9.6 5.2H0.4Z'/><path d='M5 13.7L9.6 8.8H0.4Z'/></g></svg>
<span class='t ' style='top:6.10000000000009px;font-size:15px;color:#53585e;left:90.3px;'>Chat Trực tuyến</span>
<span class='t ' style='top:6.10000000000009px;font-size:15.2px;color:#53585e;left:323.5px;'>Hướng dẫn Người dùng Odoo / Các Ứng dụng</span>
<span class='t ' style='top:6.10000000000009px;font-size:15px;color:#53585e;right:933px;'>2</span>
<span class='t ' style='top:6.10000000000009px;font-size:15px;color:#53585e;left:976px;'>Liên kết</span>
<span class='t ' style='top:6.10000000000009px;font-size:15.08px;color:#53585e;left:1237px;'>Tất cả người biên tập</span>
<span class='t ' style='top:6.10000000000009px;font-size:15.05px;color:#53585e;left:1452.8px;'>OdooBot</span>
<div class='cbd' style='left:1642px;top:9px'></div>
</div>
<div class='row' style='top:841px;height:33px;background:#fbfbfb'>
<div class='cb' style='left:13px;top:9px'></div>
<svg class='a' style='left:62px;top:8.5px' width='10' height='14' viewBox='0 0 10 14'><g fill='#a3a7ab'><path d='M5 0.3L9.6 5.2H0.4Z'/><path d='M5 13.7L9.6 8.8H0.4Z'/></g></svg>
<span class='t ' style='top:5.999999999999954px;font-size:15px;color:#53585e;left:90.3px;'>Nhân lực</span>
<span class='t ' style='top:5.999999999999954px;font-size:15.2px;color:#53585e;left:323.5px;'>Hướng dẫn Người dùng Odoo / Các Ứng dụng</span>
<span class='t ' style='top:5.999999999999954px;font-size:15px;color:#53585e;right:933px;'>2</span>
<span class='t ' style='top:5.999999999999954px;font-size:15px;color:#53585e;left:976px;'>Liên kết</span>
<span class='t ' style='top:5.999999999999954px;font-size:15.08px;color:#53585e;left:1237px;'>Tất cả người biên tập</span>
<span class='t ' style='top:5.999999999999954px;font-size:15.05px;color:#53585e;left:1452.8px;'>OdooBot</span>
<div class='cbd' style='left:1642px;top:9px'></div>
</div>
<div class='row' style='top:874px;height:33px;background:#ffffff'>
<div class='cb' style='left:13px;top:9px'></div>
<svg class='a' style='left:62px;top:8.5px' width='10' height='14' viewBox='0 0 10 14'><g fill='#a3a7ab'><path d='M5 0.3L9.6 5.2H0.4Z'/><path d='M5 13.7L9.6 8.8H0.4Z'/></g></svg>
<span class='t ' style='top:5.900000000000045px;font-size:15px;color:#53585e;left:90.3px;'>Chi tiêu</span>
<span class='t ' style='top:5.900000000000045px;font-size:15.2px;color:#53585e;left:323.5px;'>Hướng dẫn Người dùng Odoo / Các Ứng dụng</span>
<span class='t ' style='top:5.900000000000045px;font-size:15px;color:#53585e;right:933px;'>2</span>
<span class='t ' style='top:5.900000000000045px;font-size:15px;color:#53585e;left:976px;'>Liên kết</span>
<span class='t ' style='top:5.900000000000045px;font-size:15.08px;color:#53585e;left:1237px;'>Tất cả người biên tập</span>
<span class='t ' style='top:5.900000000000045px;font-size:15.05px;color:#53585e;left:1452.8px;'>OdooBot</span>
<div class='cbd' style='left:1642px;top:9px'></div>
</div>
<div class='a' style='left:1900px;top:183px;width:3px;height:723px;background:#efefef'></div>
<div class='a' style='left:1901px;top:160px;width:2px;height:523px;background:#a3a3a3'></div>
<div class='dd'>
<div class='a' style='left:0;top:158px;width:157px;height:31px;background:#e9ecef'></div>
<span class='t ' style='top:10.8px;font-size:15px;color:#53585e;left:22.5px;'>Tài liệu</span>
<span class='t ' style='top:41.5px;font-size:15px;color:#53585e;left:22.5px;'>Nhóm</span>
<span class='t ' style='top:71.4px;font-size:15px;color:#53585e;left:22.5px;'>Phân khúc</span>
<span class='t ' style='top:101.5px;font-size:15px;color:#53585e;left:22.5px;'>Chủ đề</span>
<span class='t ' style='top:132.4px;font-size:15px;color:#53585e;left:22.5px;'>Từ khóa</span>
<span class='t ' style='top:162.2px;font-size:15px;color:#53585e;left:22.5px;'>Nội dung Tài liệu</span>
</div>
<div class='a' style='left:480px;top:86px;width:147px;height:32px;border:3px solid #d2151d'></div>
</body></html>
